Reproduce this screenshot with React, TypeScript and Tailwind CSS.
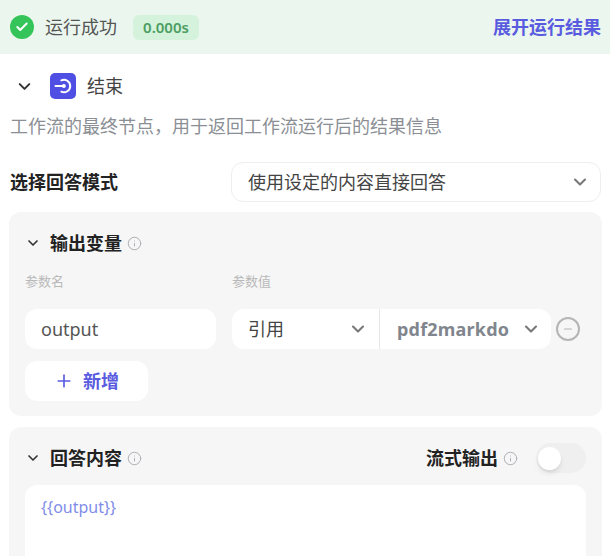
import { ChevronDown, Plus, Minus, Info, Check } from "lucide-react";

function InfoIcon() {
  return <Info className="w-[15px] h-[15px] text-[#aeb0b5] shrink-0" strokeWidth={1.6} />;
}

export default function App() {
  return (
    <div className="w-[610px] h-[556px] overflow-hidden bg-white font-['Noto_Sans','Noto_Sans_CJK_SC',sans-serif] text-[#333]">
      {/* Run status */}
      <div className="h-[54px] bg-[#ebf7ee] flex items-center justify-between pl-[10px] pr-[9px]">
        <div className="flex items-center">
          <div className="w-6 h-6 rounded-full bg-[#35c45a] flex items-center justify-center">
            <Check className="w-[14px] h-[14px] text-white" strokeWidth={3.5} />
          </div>
          <span className="ml-[11px] text-[18px] leading-6 text-[#555]">运行成功</span>
          <span className="ml-4 h-[25px] w-[66px] rounded-md bg-[#d5f2dc] text-[#4c9e62] text-[15px] font-semibold flex items-center justify-center">
            0.000s
          </span>
        </div>
        <span className="text-[18px] leading-6 font-bold text-[#5a5ce0]">展开运行结果</span>
      </div>

      {/* Node title */}
      <div className="flex items-center mt-[19px] h-[26px]">
        <ChevronDown className="ml-[15px] w-[19px] h-[19px] text-[#333]" strokeWidth={2.5} />
        <div className="ml-4 w-[26px] h-[26px] rounded-[5px] bg-[#4f50e3] flex items-center justify-center">
          <svg viewBox="0 0 24 24" className="w-5 h-5" fill="none" stroke="white" strokeWidth="2.4" strokeLinecap="round">
            <path d="M10 5.2a7.5 7.5 0 1 1 0 13.6" />
            <path d="M3 12h9" />
            <circle cx="13" cy="12" r="2.4" fill="white" stroke="none" />
          </svg>
        </div>
        <span className="ml-[11px] text-lg leading-6 text-[#444]">结束</span>
      </div>
      <p className="ml-[10px] mt-[15px] text-[18px] leading-6 text-[#8b8f95]">
        工作流的最终节点，用于返回工作流运行后的结果信息
      </p>

      {/* Answer mode */}
      <div className="flex items-center justify-between ml-[10px] mr-[9px] mt-[24px]">
        <span className="text-[18px] leading-6 font-bold text-[#222]">选择回答模式</span>
        <div className="w-[370px] h-10 rounded-xl bg-white border border-[#eeeeee] flex items-center justify-between pl-4 pr-[12px]">
          <span className="text-[18px] leading-6 text-[#444]">使用设定的内容直接回答</span>
          <ChevronDown className="w-[20px] h-[20px] -mr-[2px] text-[#777]" strokeWidth={2.5} />
        </div>
      </div>

      {/* Output variables */}
      <div className="ml-[9px] mr-[8px] mt-[10px] h-[204px] rounded-xl bg-[#f6f6f6] px-4 pt-[20px]">
        <div className="flex items-center h-[22px]">
          <ChevronDown className="w-[16px] h-[16px] text-[#333]" strokeWidth={2.5} />
          <span className="ml-[9px] text-[18px] leading-6 font-bold text-[#222]">输出变量</span>
          <span className="ml-[5px]"><InfoIcon /></span>
        </div>
        <div className="flex mt-[19px] text-[13px] leading-4 text-[#b9b9b9]">
          <span className="w-[207px]">参数名</span>
          <span>参数值</span>
        </div>
        <div className="flex items-center mt-[20px]">
          <div className="w-[191px] h-10 rounded-xl bg-white flex items-center pl-4 text-[18px] text-[#555]">output</div>
          <div className="ml-[16px] w-[319px] h-10 rounded-xl bg-white flex items-center">
            <div className="w-[148px] h-full flex items-center justify-between pl-4 pr-[12px] border-r border-[#e6e6e6]">
              <span className="text-[18px] text-[#444]">引用</span>
              <ChevronDown className="w-[20px] h-[20px] -mr-[1px] text-[#777]" strokeWidth={2.5} />
            </div>
            <div className="flex-1 flex items-center justify-between pl-[17px] pr-[10px]">
              <span className="text-[18px] tracking-[0.2px] font-bold text-[#81868e]">pdf2markdo</span>
              <ChevronDown className="w-[20px] h-[20px] text-[#777]" strokeWidth={2.5} />
            </div>
          </div>
          <div className="ml-[5px] w-6 h-6 rounded-full border-2 border-[#b5b5b5] flex items-center justify-center">
            <Minus className="w-3 h-3 text-[#b5b5b5]" strokeWidth={2} />
          </div>
        </div>
        <div className="mt-3 w-[123px] h-10 rounded-xl bg-white flex items-center justify-center">
          <Plus className="w-5 h-5 text-[#5a5ce0]" strokeWidth={2} />
          <span className="ml-[9px] text-[18px] font-bold text-[#5a5ce0]">新增</span>
        </div>
      </div>

      {/* Answer content */}
      <div className="ml-[9px] mr-[8px] mt-[11px] h-[140px] rounded-xl bg-[#f6f6f6] px-4 pt-[20px]">
        <div className="flex items-center justify-between h-[22px]">
          <div className="flex items-center">
            <ChevronDown className="w-[16px] h-[16px] text-[#333]" strokeWidth={2.5} />
            <span className="ml-[9px] text-[18px] leading-6 font-bold text-[#222]">回答内容</span>
            <span className="ml-[5px]"><InfoIcon /></span>
          </div>
          <div className="flex items-center">
            <span className="text-[18px] leading-6 font-bold text-[#222]">流式输出</span>
            <span className="ml-[5px]"><InfoIcon /></span>
            <div className="ml-[18px] w-[50px] h-[30px] -my-1 rounded-full bg-[#efefef] flex items-center">
              <div className="ml-[2px] w-[23px] h-[23px] rounded-full bg-white shadow-md" />
            </div>
          </div>
        </div>
        <div className="mt-[16px] h-[120px] rounded-xl bg-white px-4 pt-[10px] text-[16px] leading-6 text-[#7f8de8]">
          {"{{output}}"}
        </div>
      </div>
    </div>
  );
}
